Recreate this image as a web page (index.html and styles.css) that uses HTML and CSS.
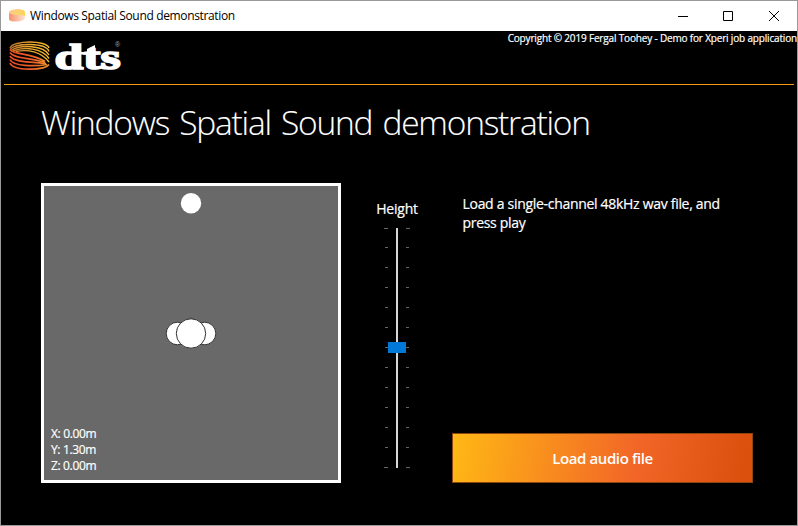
FILE: index.html
```html
<!DOCTYPE html>
<html lang="en">
<head>
<meta charset="utf-8">
<title>Windows Spatial Sound demonstration</title>
<link rel="stylesheet" href="styles.css">
</head>
<body>
<div class="window">
  <header class="titlebar">
    <svg class="app-icon" width="16" height="13" viewBox="0 0 16 13">
      <defs>
        <linearGradient id="top" x1="0" x2="1"><stop offset="0" stop-color="#fbc98f"/><stop offset="1" stop-color="#fbd758"/></linearGradient>
        <linearGradient id="low" x1="0" x2="1"><stop offset="0" stop-color="#f4916b"/><stop offset="1" stop-color="#fde3d2"/></linearGradient>
      </defs>
      <path d="M0 4C0 0 16-1 16 3V9C16 13 0 14 0 10Z" fill="url(#low)"/>
      <path d="M0 3C1-.5 16-1 16 3V7C12 5 8 8 0 4Z" fill="url(#top)"/>
    </svg>
    <span class="caption">Windows Spatial Sound demonstration</span>
    <svg class="controls" width="104" height="12" viewBox="0 0 104 12" fill="none" stroke="#000">
      <path d="M0 6.500H10M45.500 1.500H54.500V10.500H45.500ZM91 1L101 11M101 1L91 11"/>
    </svg>
  </header>
  <div class="brand">
    <svg class="logo" width="124" height="52" viewBox="0 0 124 52">
      <defs>
        <linearGradient id="gold" gradientUnits="userSpaceOnUse" x1="10" x2="49" y1="0" y2="0"><stop offset="0" stop-color="#b8702a"/><stop offset=".5" stop-color="#e9a52c"/><stop offset="1" stop-color="#f7bd2c"/></linearGradient>
        <linearGradient id="red" gradientUnits="userSpaceOnUse" x1="10" x2="49" y1="0" y2="0"><stop offset="0" stop-color="#ee4f22"/><stop offset=".6" stop-color="#e9602a"/><stop offset="1" stop-color="#f09a2c"/></linearGradient>
      </defs>
      <g fill="none" stroke="url(#gold)" stroke-width="1.400">
        <path d="M10 17C13 9 47 9 49 17"/>
        <path d="M10 18.500C16 11.500 46 11.500 49 20.500"/>
        <path d="M11 19.500C20 13.500 44 14 49 24"/>
        <path d="M13 20C24 15.500 42 17 49 27.500"/>
        <path d="M16 20.500C28 18 41 20.500 49 31"/>
      </g>
      <g fill="none" stroke="url(#red)" stroke-width="1.700">
        <path d="M10 18.500C14 24 32 22 45 30.500"/>
        <path d="M10 21.500C13 28 33 26.500 45 31.500"/>
        <path d="M10 25C13 31.500 33 31 46 32.500"/>
        <path d="M10 28.500C13 35.500 35 35.500 47 33.500"/>
        <path d="M10 32C13 40 44 40 49 33.500"/>
      </g>
      <text class="logo-text" x="54.500" y="38" textLength="66" lengthAdjust="spacingAndGlyphs">dts</text>
      <path d="M71 21H99V23.500H71ZM87 18L95 14V24H87Z" fill="#fff"/>
      <text class="logo-reg" x="115" y="16">®</text>
    </svg>
    <span class="copyright">Copyright © 2019 Fergal Toohey - Demo for Xperi job application</span>
  </div>
  <main class="content">
    <h1>Windows Spatial Sound demonstration</h1>
    <div class="panels">
      <section class="field">
        <svg width="294" height="240" viewBox="0 0 294 240">
          <circle cx="147" cy="17.300" r="10.200" fill="#fff"/>
          <g fill="#fff" stroke="#333">
            <circle cx="133.500" cy="147.500" r="11.300"/><circle cx="160.500" cy="147.500" r="11.300"/>
            <path d="M143 134L147 132L151 134Z"/><circle cx="147" cy="147.500" r="14.700"/>
          </g>
        </svg>
        <div class="coords"><div>X: 0.00m</div><div>Y: 1.30m</div><div>Z: 0.00m</div></div>
      </section>
      <section class="height">
        <label>Height</label>
        <svg width="28" height="242" viewBox="0 0 28 242">
          <path stroke="#666" d="M1 1.500H5M23 1.500H27M2 20.500H5M23 20.500H26M2 40.500H5M23 40.500H26M2 60.500H5M23 60.500H26M2 80.500H5M23 80.500H26M2 100.500H5M23 100.500H26M2 120.500H5M23 120.500H26M2 140.500H5M23 140.500H26M2 160.500H5M23 160.500H26M2 180.500H5M23 180.500H26M2 200.500H5M23 200.500H26M2 220.500H5M23 220.500H26M1 240.500H5M23 240.500H27"/>
          <path fill="#d6d6d6" d="M13 1h2v240h-2z"/>
          <path fill="#0078d7" d="M5 115h18v11H5z"/>
        </svg>
      </section>
      <section class="actions">
        <p>Load a single-channel 48kHz wav file, and<br>press play</p>
        <button type="button">Load audio file</button>
      </section>
    </div>
  </main>
</div>
</body>
</html>
```
FILE: styles.css
```css
* { box-sizing: border-box; }
body { margin: 0; font-family: "Open Sans", "Noto Sans", sans-serif; color: #fff; }
.window { width: 798px; height: 526px; border: 1px solid #999; background: #000; overflow: hidden; display: flex; flex-direction: column; }
.titlebar { height: 30px; flex: none; background: #fff; color: #000; display: flex; align-items: center; padding: 0 15px 1px 8px; }
.caption { font-size: 12px; letter-spacing: -0.35px; margin-left: 5px; flex: 1; white-space: nowrap; }
.brand { height: 54px; flex: none; margin: 0 3px; border-bottom: 1px solid #f39c12; display: flex; justify-content: space-between; align-items: flex-start; }
.logo { margin-left: -4px; }
.logo-text { font: bold 35px "Liberation Serif", serif; fill: #fff; stroke: #fff; stroke-width: 1.7px; }
.logo-reg { font: 7px "Liberation Sans", sans-serif; fill: #aaa; }
.copyright { font-size: 10px; line-height: 15px; white-space: nowrap; margin-right: -3px; letter-spacing: -0.17px; -webkit-text-stroke: 0.2px #fff; }
.content { padding: 12px 40px 0; }
h1 { margin: 0; font-size: 33.5px; font-weight: 300; line-height: 50px; letter-spacing: -1.22px; word-spacing: 2.7px; white-space: nowrap; -webkit-text-stroke: 0.1px #fff; }
.panels { display: flex; margin-top: 36px; height: 300px; }
.field { width: 300px; border: 3px solid #fff; background: #696969; display: flex; flex-direction: column; }
.coords { font-size: 12px; line-height: 16px; padding-left: 7px; letter-spacing: -0.35px; -webkit-text-stroke: 0.2px #fff; }
.height { width: 112px; display: flex; flex-direction: column; align-items: center; padding-top: 16px; }
.height label { font-size: 14px; line-height: 20px; letter-spacing: -0.2px; margin-bottom: 8px; -webkit-text-stroke: 0.2px #fff; }
.actions { width: 301px; margin-left: -1px; display: flex; flex-direction: column; justify-content: space-between; }
.actions p { margin: 11px 0 0 10.5px; font-size: 14px; line-height: 19px; letter-spacing: -0.3px; white-space: nowrap; -webkit-text-stroke: 0.2px #fff; }
button { height: 50px; border: 1px solid #8b4612; background: linear-gradient(100deg, #ffb914, #f26727 60%, #dc500e 96%); background-origin: border-box; color: #fff; font: 600 15px "Open Sans", sans-serif; letter-spacing: -0.4px; }
```
